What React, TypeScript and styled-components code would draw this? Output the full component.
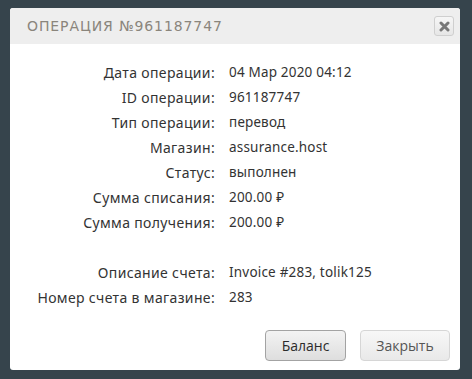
import styled, { createGlobalStyle } from "styled-components";

const GlobalStyle = createGlobalStyle`
  html, body {
    margin: 0;
    padding: 0;
    background: #36444c;
  }
  body {
    font-family: "Noto Sans", "Open Sans", sans-serif;
  }
`;

const rows = [
  { label: "Дата операции:", value: "04 Мар 2020 04:12" },
  { label: "ID операции:", value: "961187747" },
  { label: "Тип операции:", value: "перевод" },
  { label: "Магазин:", value: "assurance.host" },
  { label: "Статус:", value: "выполнен" },
  { label: "Сумма списания:", value: "200.00 ₽" },
  { label: "Сумма получения:", value: "200.00 ₽" },
  { label: "", value: "" },
  { label: "Описание счета:", value: "Invoice #283, tolik125" },
  { label: "Номер счета в магазине:", value: "283" },
];

export default function App() {
  return (
    <>
      <GlobalStyle />
      <Page>
        <Modal>
          <Header>
            <Title>Операция №961187747</Title>
            <CloseButton aria-label="close">
              <svg width="11" height="11" viewBox="0 0 11 11">
                <path
                  d="M2 2 L9 9 M9 2 L2 9"
                  stroke="#777777"
                  strokeWidth="3"
                  strokeLinecap="round"
                />
              </svg>
            </CloseButton>
          </Header>
          <Body>
            {rows.map((row, i) => (
              <Row key={i}>
                <Label>{row.label}</Label>
                <Value>{row.value}</Value>
              </Row>
            ))}
          </Body>
          <Footer>
            <Button primary>Баланс</Button>
            <Button>Закрыть</Button>
          </Footer>
        </Modal>
      </Page>
    </>
  );
}

const Page = styled.div`
  padding: 8px 0 0 10px;
  height: 379px;
  box-sizing: border-box;
`;

const Modal = styled.div`
  width: 450px;
  height: 362px;
  background: #ffffff;
  border-radius: 3px;
  display: flex;
  flex-direction: column;
  overflow: hidden;
`;

const Header = styled.div`
  height: 36px;
  background: #eeeeee;
  display: flex;
  align-items: center;
  justify-content: space-between;
  padding: 0 6px 0 17px;
`;

const Title = styled.div`
  font-family: "DejaVu Sans", "Liberation Sans", sans-serif;
  font-size: 14px;
  text-transform: uppercase;
  letter-spacing: 0.9px;
  color: #8a857c;
`;

const CloseButton = styled.button`
  width: 20px;
  height: 20px;
  padding: 0;
  border: 1px solid #cfcfcf;
  border-radius: 3px;
  background: linear-gradient(#f6f6f6, #e6e6e6);
  display: flex;
  align-items: center;
  justify-content: center;
`;

const Body = styled.div`
  flex: 1;
  padding-top: 16px;
`;

const Row = styled.div`
  display: grid;
  grid-template-columns: 205px 1fr;
  column-gap: 14px;
  height: 25px;
  line-height: 25px;
  color: #333333;
`;

const Label = styled.div`
  text-align: right;
  white-space: nowrap;
  font-size: 14px;
  letter-spacing: 0.35px;
`;

const Value = styled.div`
  white-space: nowrap;
  font-size: 13.5px;
  letter-spacing: 0.2px;
`;

const Footer = styled.div`
  display: flex;
  justify-content: flex-end;
  gap: 14px;
  padding: 0 10px 9px 0;
`;

const Button = styled.button<{ primary?: boolean }>`
  height: 31px;
  padding: 0 ${({ primary }) => (primary ? "14px" : "15px")};
  min-width: ${({ primary }) => (primary ? "81px" : "90px")};
  font-family: "Open Sans", "Liberation Sans", sans-serif;
  font-size: 14px;
  color: ${({ primary }) => (primary ? "#2b2b2b" : "#555555")};
  border: 1px solid ${({ primary }) => (primary ? "#a3a3a3" : "#d6d6d6")};
  border-radius: 4px;
  background: ${({ primary }) =>
    primary
      ? "linear-gradient(#f3f3f3, #dedede)"
      : "linear-gradient(#f7f7f7, #e9e9e9)"};
`;
